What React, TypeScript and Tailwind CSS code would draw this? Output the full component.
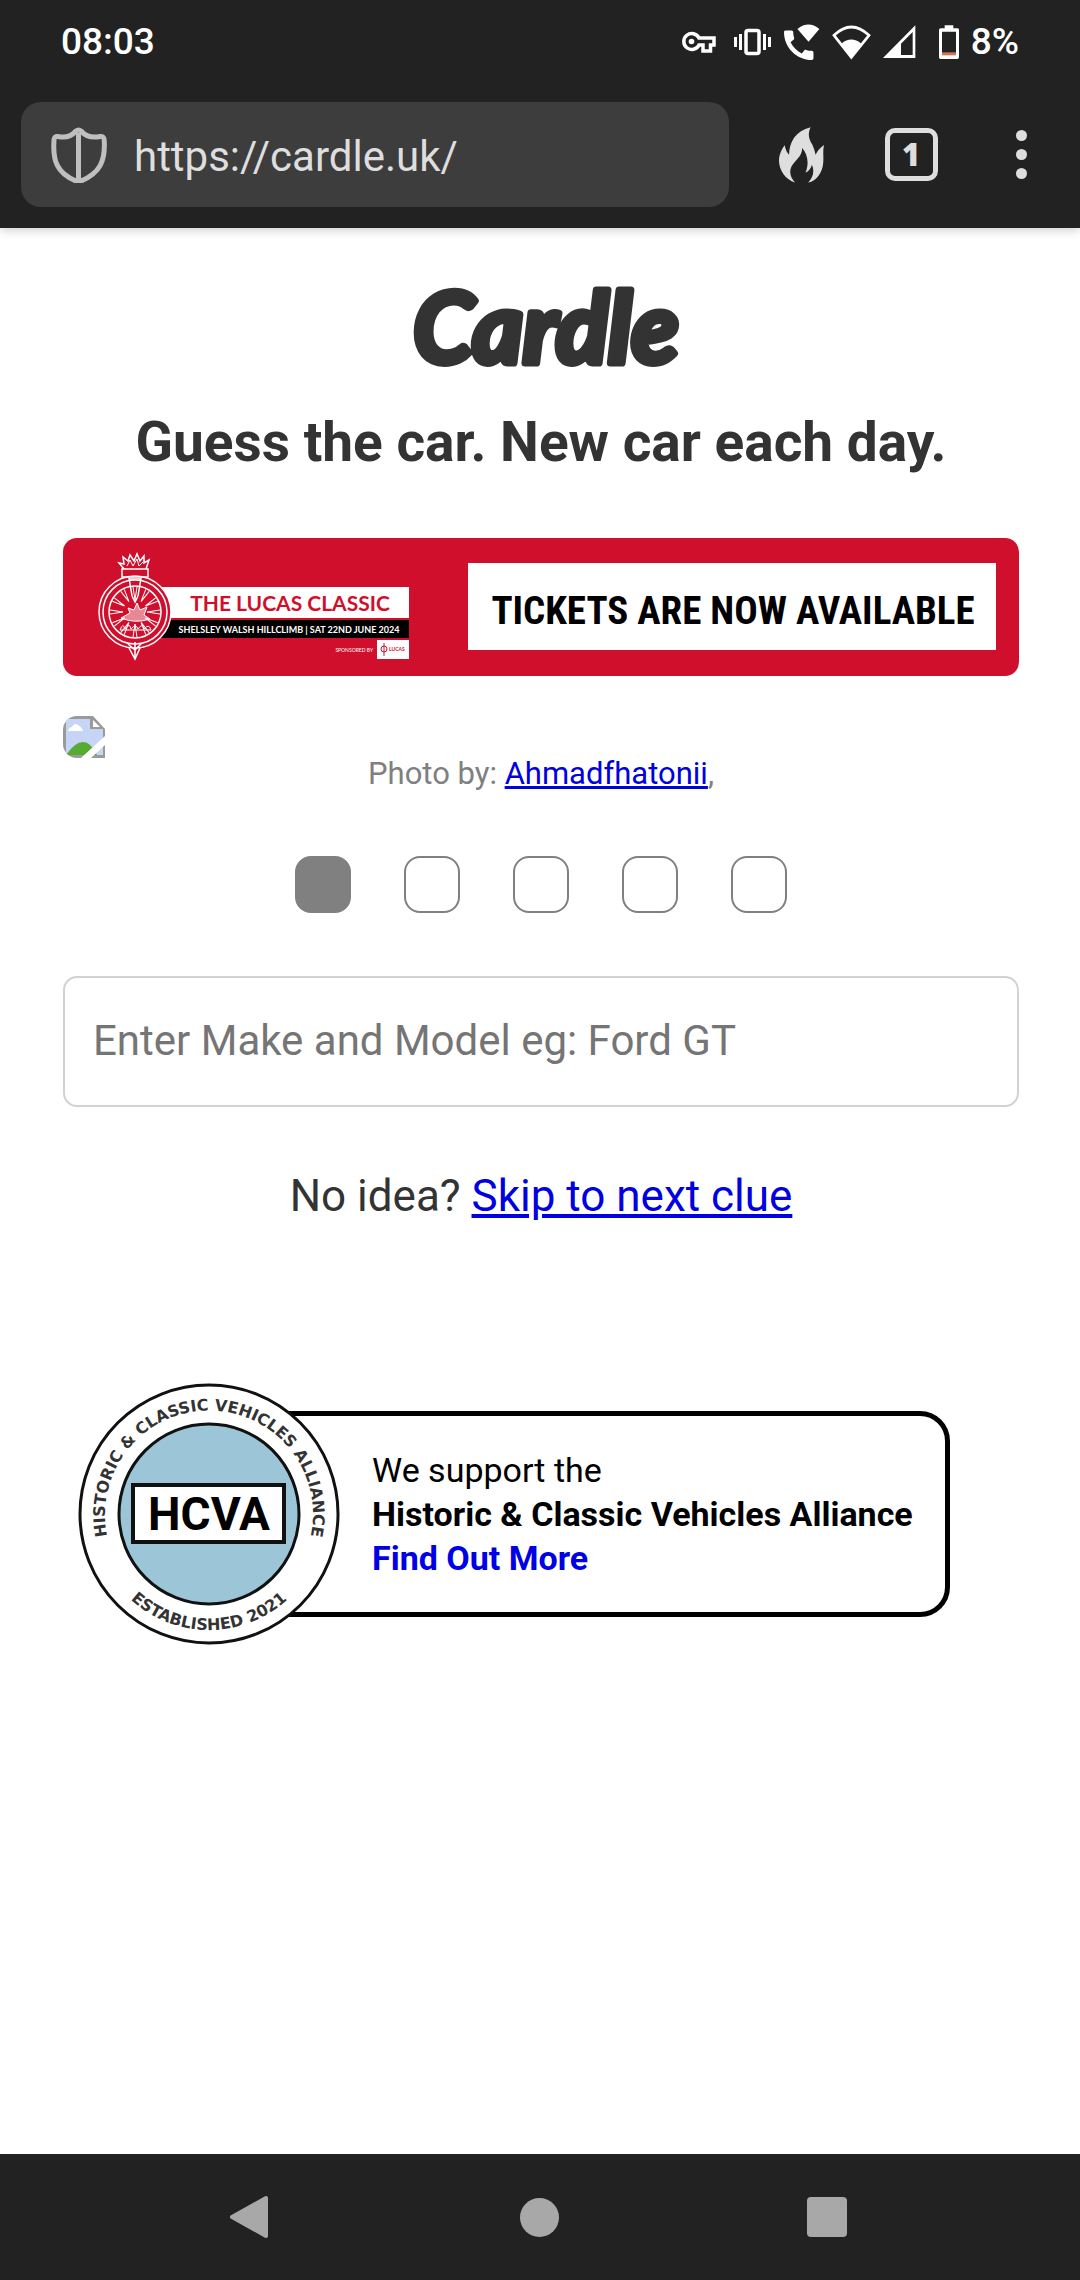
import React from "react";

const GUESSES = [true, false, false, false, false];
const SPOKES = [0, 30, 60, 90, 120, 150, 180, 210, 240, 270, 300, 330];

export default function App() {
  return (
    <div className="flex min-h-screen flex-col bg-white font-['Roboto','Liberation_Sans',sans-serif]">
      <header className="relative bg-[#222222] shadow-[0_2px_10px_rgba(0,0,0,0.2)]">
        <StatusBar />
        <BrowserBar />
      </header>

      <main className="flex flex-1 flex-col pt-8 pr-[61px] pl-[63px] text-[#333333]">
        <h1 className="flex justify-center">
          <CardleLogo />
        </h1>
        <h2 className="mt-5 text-center text-[55px] leading-[64px] font-bold">
          Guess the car. New car each day.
        </h2>

        <a href="#tickets" className="mt-16 block overflow-hidden rounded-[14px]">
          <LucasBanner />
        </a>

        <figure className="mt-10">
          <BrokenImage />
          <figcaption className="text-center text-[31px] leading-8 text-[#808080]">
            Photo by: <a href="#photo" className="text-[#0000e0] underline">Ahmadfhatonii</a>,
          </figcaption>
        </figure>

        {/* One square per guess */}
        <div className="mt-[66px] flex justify-center gap-[53px]">
          {GUESSES.map((used, i) => (
            <span
              key={i}
              className={`h-[57px] w-14 rounded-2xl border-2 border-[#808080] ${used ? "bg-[#808080]" : "bg-white"}`}
            />
          ))}
        </div>

        <input
          type="text"
          aria-label="Make and model"
          placeholder="Enter Make and Model eg: Ford GT"
          className="mt-[63px] h-[131px] w-full rounded-[14px] border-2 border-[#d0d2d3] px-7 pb-0.5 text-[42px] outline-none placeholder:text-[#757575]"
        />

        <p className="mt-[63px] text-center text-[44px] leading-[52px]">
          No idea? <a href="#skip" className="text-[#0000e0] underline">Skip to next clue</a>
        </p>

        <section className="mt-[161px] ml-[15px] flex items-center text-black">
          <HcvaBadge />
          <div className="-ml-[100px] rounded-[30px] border-[5px] border-black py-8 pr-8 pl-[127px] text-[34px] leading-[44px]">
            <p>We support the</p>
            <p className="font-bold">Historic &amp; Classic Vehicles Alliance</p>
            <a href="#hcva" className="font-bold text-[#0000e6]">Find Out More</a>
          </div>
        </section>
      </main>

      <NavBar />
    </div>
  );
}

function StatusBar() {
  return (
    <div className="flex h-[84px] items-center justify-between px-[61px] text-[37px] font-medium text-white">
      <span>08:03</span>
      <div className="flex items-center gap-3">
        {/* VPN key */}
        <svg width="40" height="40" viewBox="0 0 40 40" fill="none" stroke="white" strokeWidth="3.500">
          <path d="M17 16H32V23H28.500V29H21V23H17A8 8 0 1 1 17 16Z" />
          <circle cx="9.500" cy="19.500" r="2.800" fill="white" stroke="none" />
        </svg>
        {/* Vibrate */}
        <svg width="38" height="40" viewBox="0 0 38 40" fill="none" stroke="white" strokeWidth="3">
          <rect x="12" y="8.500" width="13" height="23" rx="2" strokeWidth="3.500" />
          <path d="M1.500 15V25M6.500 12V28M30.500 12V28M35.500 15V25" />
        </svg>
        {/* Wi-Fi calling */}
        <svg width="36" height="36" viewBox="3 -1 22 22" fill="white">
          <path d="M20.01 15.38c-1.23 0-2.42-.2-3.53-.56-.35-.12-.74-.03-1.01.24l-1.57 1.97c-2.83-1.35-5.48-3.9-6.89-6.83l1.95-1.66c.27-.28.35-.67.24-1.02-.37-1.11-.56-2.3-.56-3.53 0-.54-.45-.99-.99-.99H4.19C3.65 3 3 3.24 3 3.99 3 13.28 10.73 21 20.01 21c.71 0 .99-.63.99-1.18v-3.45c0-.54-.45-.99-.99-.99z" />
          <path d="M11.200 2Q18 -3.400 24.600 2L18 9.800Z" />
        </svg>
        <svg width="39" height="36" viewBox="0 0 117 108">
          <path d="M6 34Q58 -16 111 34L58 100Z" fill="none" stroke="white" strokeWidth="8" />
          <path d="M28 59Q58 34 88 59L58 98Z" fill="white" />
        </svg>
        <svg width="44" height="36" viewBox="0 0 132 108">
          <path d="M97 4V102H0ZM89 24L54 59V93H89Z" fill="white" fillRule="evenodd" />
        </svg>
        <svg width="20" height="36" viewBox="0 0 60 108">
          <path d="M17 4H43V13H56Q60 13 60 18V100Q60 105 55 105H5Q0 105 0 100V18Q0 13 5 13H17ZM9 23V86H51V23Z" fill="white" fillRule="evenodd" />
          <path d="M9 86H51V94H9Z" fill="#d9704f" />
        </svg>
        <span>8%</span>
      </div>
    </div>
  );
}

function BrowserBar() {
  return (
    <div className="flex items-center pt-[18px] pr-1 pb-[21px] pl-[21px]">
      <div className="mr-[17px] flex h-[105px] min-w-0 flex-1 items-center gap-[27px] rounded-[20px] bg-[#3d3d3d] pl-[30px]">
        <svg width="56" height="56" viewBox="0 0 56 56" fill="none" stroke="#bfbfbf" strokeWidth="5" strokeLinejoin="round" className="shrink-0">
          <path d="M25 4Q27.500 2 30 4Q37 12 49 9.500Q53 9 53.200 13C54.500 34 49 46 30 54Q27.500 55.500 25 54C6 46 1.500 34 3 13Q3.200 9 7 9.500Q18 12 25 4Z" />
          <path d="M27.500 6V53" />
        </svg>
        <input
          type="url"
          aria-label="Address"
          defaultValue="https://cardle.uk/"
          className="w-full min-w-0 bg-transparent pt-1 text-[42px] text-[#dedede] outline-none"
        />
      </div>
      <button type="button" aria-label="Clear data" className="flex w-[110px] justify-center">
        <svg width="45" height="56" viewBox="0 0 134 166" fill="#dedede">
          <path d="M94 0C84 22 90 38 99 52Q106 66 109 82Q116 66 134 53C129 75 135 95 130 118C124 142 108 162 87 165C100 151 107 134 98 112C95 122 90 130 79 136C91 105 84 80 69 62C69 88 48 98 38 116C28 135 36 153 48 165C20 157 0 128 0 100C0 82 8 66 17 54Q20 72 30 82C30 45 50 10 94 0Z" />
        </svg>
      </button>
      <button type="button" aria-label="Tabs" className="flex w-[110px] justify-center">
        <span className="flex size-[53px] items-center justify-center rounded-[10px] border-[5px] border-[#dedede] font-['Open_Sans',sans-serif] text-[31px] leading-none font-extrabold text-[#dedede]">
          1
        </span>
      </button>
      <button type="button" aria-label="Menu" className="flex w-[110px] flex-col items-center gap-2">
        <span className="size-[11px] rounded-full bg-[#dedede]" />
        <span className="size-[11px] rounded-full bg-[#dedede]" />
        <span className="size-[11px] rounded-full bg-[#dedede]" />
      </button>
    </div>
  );
}

function CardleLogo() {
  return (
    <svg width="300" height="130" viewBox="0 0 300 130" role="img" aria-label="Cardle">
      <text
        x="155"
        y="103"
        textAnchor="middle"
        fill="#333333"
        stroke="#333333"
        strokeWidth="7"
        strokeLinejoin="round"
        className="font-['Lato',sans-serif] text-[97px] font-bold italic"
      >
        Cardle
      </text>
    </svg>
  );
}

function LucasBanner() {
  return (
    <svg viewBox="0 0 956 138" className="block w-full">
      <rect width="956" height="138" fill="#d00f2c" />
      <rect x="98" y="49" width="248" height="31" fill="white" />
      <rect x="98" y="82" width="248" height="18" fill="black" />
      <text x="227" y="73" textAnchor="middle" fill="#d00f2c" className="font-['Lato',sans-serif] text-[21px] font-bold">
        THE LUCAS CLASSIC
      </text>
      <text x="226" y="95" textAnchor="middle" fill="white" className="font-['Lato',sans-serif] text-[9px] font-bold">
        SHELSLEY WALSH HILLCLIMB | SAT 22ND JUNE 2024
      </text>
      <text x="310" y="114" textAnchor="end" fill="white" className="font-['Lato',sans-serif] text-[5px]">
        SPONSORED BY
      </text>
      <rect x="314" y="102" width="32" height="19" fill="white" />
      <g stroke="#d00f2c" fill="none">
        <circle cx="321" cy="111" r="3" />
        <path d="M321 105V118" />
      </g>
      <text x="326" y="113" fill="#d00f2c" className="font-['Lato',sans-serif] text-[5px] font-bold">LUCAS</text>

      {/* Torch and wheel emblem */}
      <g stroke="white" fill="none" strokeWidth="1.500">
        <circle cx="72" cy="74" r="36" fill="#d00f2c" />
        <circle cx="72" cy="74" r="32" />
        <circle cx="72" cy="74" r="26" strokeWidth="1.500" />
        {SPOKES.map((a) => (
          <path key={a} d="M72 62L70 49M72 62L74 49" strokeWidth="1" transform={`rotate(${a} 72 74)`} />
        ))}
        <path d="M58 80L67 75L65 70L71 72L74 65L77 72L84 69L81 77L87 81Q72 86 58 80Z" fill="white" fillOpacity="0.5" strokeWidth="1" />
        <path d="M57 92Q60 84 62 91Q67 84 68 91Q73 85 75 91Q80 84 81 91Q86 85 88 92H57" strokeWidth="1" />
        <path d="M59 31H85V39H59ZM66 40L69 58M78 40L75 58M69 58L72 64L75 58M66 41H78" />
        <path d="M61 31L56 25L61 26L60 19L65 23L67 17L71 23L74 16L77 23L81 18L81 25L86 22L83 31" />
        <path d="M64 28L67 22L70 28L74 21L76 28L80 24" strokeWidth="1" />
        <path d="M65 106L72 112L78 106M66 110L72 121L77 110M72 104V121" />
      </g>

      <rect x="405" y="25" width="528" height="87" fill="white" />
      <text
        x="670"
        y="86"
        textAnchor="middle"
        fill="black"
        className="font-['Liberation_Sans_Narrow','Roboto_Condensed','Roboto',sans-serif] text-[39px] font-bold"
      >
        TICKETS ARE NOW AVAILABLE
      </text>
    </svg>
  );
}

function BrokenImage() {
  return (
    <svg width="42" height="42" viewBox="0 0 42 42" role="img" aria-label="Car" className="overflow-hidden rounded-tl-[14px] rounded-bl-[14px]">
      <path d="M0 0H30L42 13V42H0Z" fill="#9a9a9a" />
      <path d="M3 3H27V13H40V39H3Z" fill="#c6d5f5" />
      <path d="M30 4V11H37Z" fill="white" />
      <path d="M5 15Q6 11 9 11Q11 6 15 9Q19 11 20 15Z" fill="white" />
      <path d="M3 39Q12 26 20 26Q28 26 34 39Z" fill="#57ab33" />
      <path d="M42 20L18 42H28L42 29Z" fill="white" />
    </svg>
  );
}

function HcvaBadge() {
  return (
    <svg width="262" height="262" viewBox="0 0 262 262" className="relative shrink-0" role="img" aria-label="HCVA">
      <defs>
        <path id="badge-top" d="M31 160A104 104 0 1 1 231 160" />
        <path id="badge-bottom" d="M15 131A116 116 0 0 0 247 131" />
      </defs>
      <circle cx="131" cy="131" r="129" fill="white" stroke="#111111" strokeWidth="3" />
      <circle cx="131" cy="131" r="90" fill="#9dc5d8" stroke="#111111" strokeWidth="3" />
      <rect x="55" y="102" width="151" height="57" fill="white" stroke="#111111" strokeWidth="4" />
      <text x="131" y="147" textAnchor="middle" fill="black" className="font-['Roboto',sans-serif] text-[46px] font-bold">
        HCVA
      </text>
      <text fill="#333333" textAnchor="middle" className="font-['DejaVu_Sans',sans-serif] text-[16px] font-bold">
        <textPath href="#badge-top" startOffset="50%">HISTORIC &amp; CLASSIC VEHICLES ALLIANCE</textPath>
      </text>
      <text fill="#333333" textAnchor="middle" className="font-['DejaVu_Sans',sans-serif] text-[16px] font-bold">
        <textPath href="#badge-bottom" startOffset="50%">ESTABLISHED 2021</textPath>
      </text>
    </svg>
  );
}

function NavBar() {
  return (
    <nav className="flex h-[126px] items-center bg-[#222222] pr-[109px] pl-[107px]">
      <button type="button" aria-label="Back" className="flex flex-1 justify-center">
        <svg width="44" height="44" viewBox="0 0 44 44" fill="#a8a8a8" stroke="#a8a8a8" strokeWidth="4" strokeLinejoin="round">
          <path d="M3 22L37 3V41Z" />
        </svg>
      </button>
      <button type="button" aria-label="Home" className="flex flex-1 justify-center">
        <span className="size-[39px] rounded-full bg-[#a8a8a8]" />
      </button>
      <button type="button" aria-label="Recent apps" className="flex flex-1 justify-center">
        <span className="size-10 rounded bg-[#a8a8a8]" />
      </button>
    </nav>
  );
}
